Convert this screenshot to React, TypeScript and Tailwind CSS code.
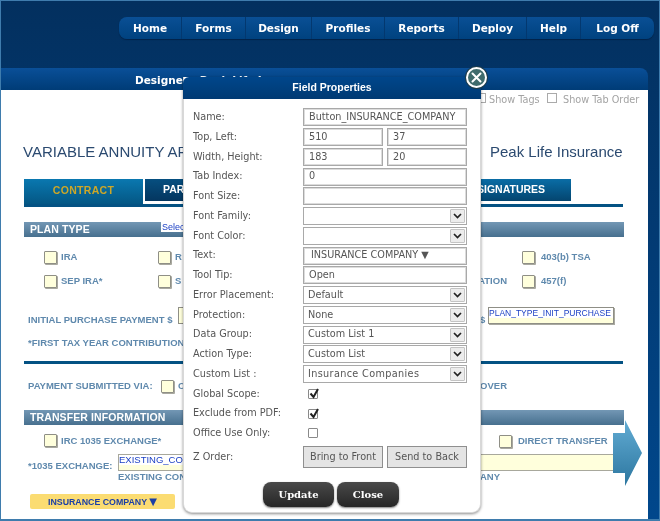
import { ReactNode } from "react";

const navItems = [
  { label: "Home", width: "w-[62px]" },
  { label: "Forms", width: "w-[64px]" },
  { label: "Design", width: "w-[66px]" },
  { label: "Profiles", width: "w-[73px]" },
  { label: "Reports", width: "w-[74px]" },
  { label: "Deploy", width: "w-[68px]" },
  { label: "Help", width: "w-[54px]" },
  { label: "Log Off", width: "w-[74px]" },
];

// form canvas items, the designer places them freely
const checks = [
  "left-[43px] top-[161px]",
  "left-[157px] top-[161px]",
  "left-[521px] top-[161px]",
  "left-[43px] top-[185px]",
  "left-[157px] top-[185px]",
  "left-[521px] top-[185px]",
  "left-[160px] top-[290px]",
  "left-[43px] top-[344px]",
  "left-[498px] top-[345px]",
];

const labels = [
  { text: "IRA", pos: "left-[60px] top-[161px]" },
  { text: "R", pos: "left-[174px] top-[161px]" },
  { text: "403(b) TSA", pos: "left-[540px] top-[161px]" },
  { text: "SEP IRA*", pos: "left-[60px] top-[185px]" },
  { text: "S", pos: "left-[174px] top-[185px]" },
  { text: "ATION", pos: "right-[141px] top-[185px]" },
  { text: "457(f)", pos: "left-[540px] top-[185px]" },
  { text: "INITIAL PURCHASE PAYMENT $", pos: "left-[27px] top-[224px]" },
  { text: "$", pos: "left-[479px] top-[224px]" },
  { text: "*FIRST TAX YEAR CONTRIBUTION", pos: "left-[27px] top-[247px]" },
  { text: "PAYMENT SUBMITTED VIA:", pos: "left-[27px] top-[290px]" },
  { text: "C", pos: "left-[177px] top-[290px]" },
  { text: "LOVER", pos: "right-[141px] top-[290px]" },
  { text: "IRC 1035 EXCHANGE*", pos: "left-[60px] top-[345px]" },
  { text: "DIRECT TRANSFER", pos: "left-[517px] top-[345px]" },
  { text: "*1035 EXCHANGE:", pos: "left-[27px] top-[370px]" },
];

function Check({ pos }: { pos: string }) {
  return (
    <span className={`absolute ${pos} w-[13px] h-[13px] bg-[#ffffdc] border border-[#8f8f86] rounded-[1px] shadow-[1px_1px_0_#a9a9a0]`} />
  );
}

function Label({ text, pos }: { text: string; pos: string }) {
  return (
    <span className={`absolute ${pos} h-[13px] flex items-center whitespace-nowrap text-[9.5px] font-bold text-[#5f89ad]`}>
      {text}
    </span>
  );
}

function SectionBar({ text, pos }: { text: string; pos: string }) {
  return (
    <div className={`absolute ${pos} w-[600px] h-[15px] pl-[6px] flex items-center bg-gradient-to-b from-[#7397b4] to-[#47708f] text-white text-[10.5px] font-bold tracking-[0.1px]`}>
      {text}
    </div>
  );
}

function Rule({ pos }: { pos: string }) {
  return <div className={`absolute ${pos} w-[599px] h-[3px] bg-[#045283]`} />;
}

function TextBox({ value, className = "" }: { value?: string; className?: string }) {
  return (
    <div className={`h-[18px] border border-[#a9a9a9] outline outline-1 outline-[#dcdcdc] -outline-offset-2 px-[5px] flex items-center text-[9.7px] text-[#555] whitespace-nowrap overflow-hidden ${className}`}>
      {value}
    </div>
  );
}

function SelectBox({ value, wide }: { value?: string; wide?: boolean }) {
  return (
    <div className="h-[18px] border border-[#a9a9a9] pl-[4px] flex items-center justify-between text-[9.7px] text-[#555]">
      <span className={wide ? "font-medium tracking-[0.35px]" : ""}>{value}</span>
      <span className="w-[15px] h-[14px] mr-[1px] bg-[#ececec] border border-[#c4c4c4] rounded-[1px] flex items-center justify-center">
        <svg width="9" height="6" viewBox="0 0 9 6" fill="none" stroke="#222" strokeWidth="1.7">
          <path d="M1 1l3.5 3.5L8 1" />
        </svg>
      </span>
    </div>
  );
}

function Tick({ checked }: { checked?: boolean }) {
  return (
    <div className="h-full flex items-center pl-[5px]">
      <span className="relative w-[10px] h-[10px] border border-[#8a8a8a] bg-white rounded-[1px]">
        {checked && (
          <svg className="absolute -top-[2px] -left-[1px]" width="12" height="12" viewBox="0 0 12 12" fill="none" stroke="#222" strokeWidth="2">
            <path d="M2.5 5.5l3 3.5 4.5-8" />
          </svg>
        )}
      </span>
    </div>
  );
}

function Row({ label, children }: { label: string; children?: ReactNode }) {
  return (
    <div className="h-[19.75px] grid grid-cols-[110px_164px] items-center">
      <span className="text-[9.7px] text-[#555] whitespace-nowrap">{label}</span>
      <div className="h-full flex flex-col justify-center">{children}</div>
    </div>
  );
}

function FieldProperties() {
  return (
    <div className="absolute left-[182px] top-[76px] w-[298px] h-[436px] bg-white rounded-b-[9px] shadow-[0_1px_3px_rgba(0,0,0,0.45)] border-x border-b border-[#d8d8d8] font-['DejaVu_Sans',sans-serif]">
      <div className="h-[22px] rounded-t-[6px] -mx-px bg-gradient-to-b from-[#00468b] to-[#003a73] flex items-center justify-center text-white text-[10.5px] font-bold font-['Liberation_Sans',sans-serif]">
        Field Properties
      </div>
      <button className="absolute -top-[10px] left-[282px] w-[21px] h-[21px] rounded-full bg-[#3f6b6c] border-2 border-white flex items-center justify-center shadow-[0_0_0_1px_#1d3c4c]">
        <svg width="11" height="11" viewBox="0 0 11 11" stroke="#fff" strokeWidth="2" strokeLinecap="round">
          <path d="M1.5 1.5l8 8M9.5 1.5l-8 8" />
        </svg>
      </button>

      <div className="pt-[8.5px] pl-[9px]">
        <Row label="Name:"><TextBox value="Button_INSURANCE_COMPANY" /></Row>
        <Row label="Top, Left:">
          <div className="grid grid-cols-2 gap-[4px]"><TextBox value="510" /><TextBox value="37" /></div>
        </Row>
        <Row label="Width, Height:">
          <div className="grid grid-cols-2 gap-[4px]"><TextBox value="183" /><TextBox value="20" /></div>
        </Row>
        <Row label="Tab Index:"><TextBox value="0" /></Row>
        <Row label="Font Size:"><TextBox /></Row>
        <Row label="Font Family:"><SelectBox /></Row>
        <Row label="Font Color:"><SelectBox /></Row>
        <Row label="Text:"><TextBox value="INSURANCE COMPANY ▼" className="pl-[7px]" /></Row>
        <Row label="Tool Tip:"><TextBox value="Open" /></Row>
        <Row label="Error Placement:"><SelectBox value="Default" /></Row>
        <Row label="Protection:"><SelectBox value="None" /></Row>
        <Row label="Data Group:"><SelectBox value="Custom List 1" /></Row>
        <Row label="Action Type:"><SelectBox value="Custom List" /></Row>
        <Row label="Custom List :"><SelectBox value="Insurance Companies" wide /></Row>
        <Row label="Global Scope:"><Tick checked /></Row>
        <Row label="Exclude from PDF:"><Tick checked /></Row>
        <Row label="Office Use Only:"><Tick /></Row>
        <div className="mt-[3px] h-[22px] grid grid-cols-[110px_80px_84px] items-center">
          <span className="text-[9.7px] text-[#555]">Z Order:</span>
          <button className="h-full border border-[#8f8f8f] bg-[#e4e4e4] text-[9.7px] text-[#555]">Bring to Front</button>
          <button className="h-full ml-[4px] border border-[#8f8f8f] bg-[#e4e4e4] text-[9.7px] text-[#555]">Send to Back</button>
        </div>
        <div className="mt-[13.5px] ml-[70px] flex gap-[3px]">
          <button className="w-[71px] h-[25px] rounded-[8px] bg-gradient-to-b from-[#4a4a4a] to-[#262626] shadow-[0_1px_2px_rgba(0,0,0,0.5)] text-white text-[10px] font-bold font-['DejaVu_Serif',serif]">Update</button>
          <button className="w-[62px] h-[25px] rounded-[8px] bg-gradient-to-b from-[#4a4a4a] to-[#262626] shadow-[0_1px_2px_rgba(0,0,0,0.5)] text-white text-[10px] font-bold font-['DejaVu_Serif',serif]">Close</button>
        </div>
      </div>
    </div>
  );
}

export default function App() {
  return (
    <div className="relative w-[660px] h-[521px] overflow-hidden flex flex-col border border-b-2 border-[#3f7cad] bg-gradient-to-b from-[#03305f] to-[#00478c] font-['Liberation_Sans',sans-serif] blur-[0.35px]">
      <div className="h-[67px] shrink-0 pt-[16px] pl-[118px]">
        <nav className="w-[535px] h-[22px] flex rounded-[8px] bg-gradient-to-b from-[#0a4f95] to-[#00427f] shadow-[0_1px_1px_rgba(0,20,50,0.5)]">
          {navItems.map((item, i) => (
            <a
              key={item.label}
              className={`${item.width} pt-[2px] flex items-center justify-center text-white text-[10.5px] font-bold font-['DejaVu_Sans',sans-serif] ${i > 0 ? "border-l border-[#03386f]" : ""}`}
            >
              {item.label}
            </a>
          ))}
        </nav>
      </div>

      <div className="w-[647px] flex-1 min-h-0 flex flex-col">
        <div className="h-[22px] shrink-0 rounded-tr-[8px] pl-[134px] pt-[5px] bg-gradient-to-b from-[#0a4f98] to-[#003c77] text-white text-[10.5px] font-bold font-['DejaVu_Sans',sans-serif] leading-[14px] whitespace-nowrap">
          Designer - Peak Life In
        </div>

        <div className="relative flex-1 bg-white">
          <div className="absolute left-[476px] top-[3px] w-[9px] h-[10px] border border-[#aaa]" />
          <span className="absolute left-[488px] top-[3px] text-[9.7px] leading-[14px] text-[#a3a3a3] font-['DejaVu_Sans',sans-serif]">Show Tags</span>
          <div className="absolute left-[546px] top-[3px] w-[10px] h-[10px] border border-[#aaa]" />
          <span className="absolute left-[562px] top-[3px] text-[9.7px] leading-[14px] text-[#a3a3a3] font-['DejaVu_Sans',sans-serif]">Show Tab Order</span>

          <h1 className="absolute left-[22px] top-[52px] w-[161px] overflow-hidden text-[15px] leading-[20px] text-[#2b4a70] whitespace-nowrap">VARIABLE ANNUITY AP</h1>
          <h2 className="absolute left-[489px] top-[52px] text-[15px] leading-[20px] text-[#2b4a70] whitespace-nowrap">Peak Life Insurance</h2>

          <div className="absolute left-[23px] top-[89px] w-[119px] h-[28px] pb-[5px] flex items-center justify-center bg-gradient-to-b from-[#0a78b0] to-[#04537f] text-[#cda728] text-[10.5px] font-bold tracking-[0.3px]">CONTRACT</div>
          <div className="absolute left-[142px] top-[89px] w-[41px] h-[24px] pl-[18px] flex items-center overflow-hidden border-l-2 border-b-2 border-white bg-gradient-to-b from-[#064f80] to-[#04365f] text-white text-[10.5px] font-bold">PAR</div>
          <div className="absolute left-[440px] top-[89px] w-[130px] h-[22px] pl-[36px] flex items-center bg-gradient-to-b from-[#0a6da6] to-[#04456f] text-white text-[10.5px] font-bold">SIGNATURES</div>
          <Rule pos="left-[23px] top-[114px]" />

          <SectionBar text="PLAN TYPE" pos="left-[23px] top-[132px]" />
          <span className="absolute left-[160px] top-[132px] w-[23px] overflow-hidden bg-white px-px text-[9px] leading-[10px] text-[#1a3fc4]">Select</span>

          {checks.map((pos) => <Check key={pos} pos={pos} />)}
          {labels.map((l) => <Label key={l.text} text={l.text} pos={l.pos} />)}

          <div className="absolute left-[177px] top-[217px] w-[6px] h-[17px] bg-[#ffffdc] border-y border-l border-[#8f8f86]" />
          <div className="absolute left-[487px] top-[217px] w-[126px] h-[17px] bg-[#ffffdc] border border-[#8f8f86] shadow-[1px_1px_0_#a9a9a0]">
            <span className="block bg-white text-[8.5px] leading-[10px] text-[#1a3fc4] whitespace-nowrap">PLAN_TYPE_INIT_PURCHASE</span>
          </div>

          <Rule pos="left-[23px] top-[271px]" />

          <SectionBar text="TRANSFER INFORMATION" pos="left-[23px] top-[320px]" />

          <div className="absolute left-[117px] top-[364px] w-[497px] h-[17px] bg-[#ffffdc] border border-[#a8a89c]">
            <span className="block bg-white w-[65px] overflow-hidden text-[9.5px] leading-[10px] text-[#1a3fc4] whitespace-nowrap">EXISTING_CON</span>
          </div>
          <div className="absolute left-[117px] top-[381px] w-[382px] h-[13px] flex items-center justify-between text-[9.5px] font-bold text-[#5f89ad] whitespace-nowrap">
            <span>EXISTING CON</span>
            <span>ANY</span>
          </div>

          <button className="absolute left-[29px] top-[404px] w-[145px] h-[15px] rounded-[2px] bg-[#fbdc72] text-[#1b3ea6] text-[8.8px] font-bold whitespace-nowrap">
            INSURANCE COMPANY <span className="text-[10px] font-['DejaVu_Sans',sans-serif]">▼</span>
          </button>

          <svg className="absolute left-[612px] top-[330px]" width="29" height="67" viewBox="0 0 29 67">
            <defs>
              <linearGradient id="arrowFill" x1="0" y1="0" x2="0" y2="1">
                <stop offset="0" stopColor="#62acd4" />
                <stop offset="1" stopColor="#2c769f" />
              </linearGradient>
            </defs>
            <path d="M0 13h12V0l17 33L12 66V53H0z" fill="url(#arrowFill)" />
          </svg>
        </div>
      </div>

      <FieldProperties />
    </div>
  );
}
